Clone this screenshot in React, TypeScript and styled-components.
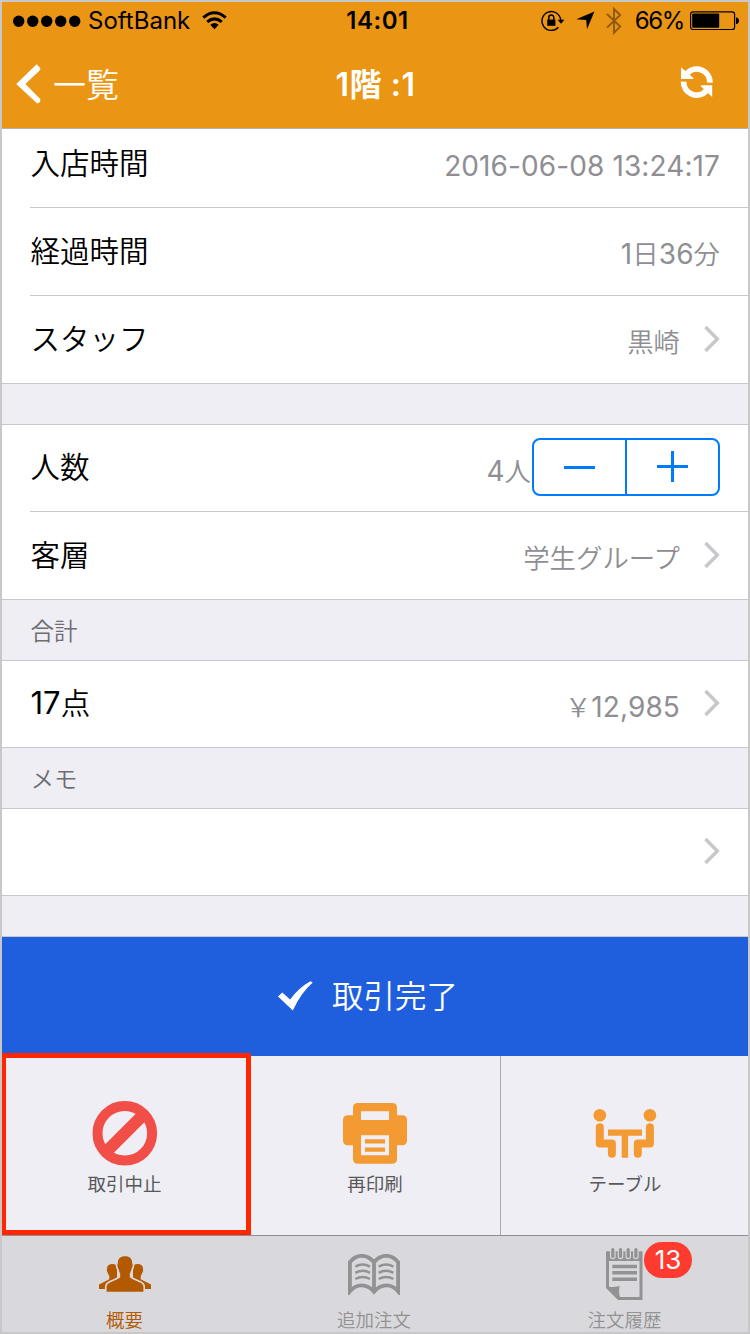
import React from "react";
import styled, { createGlobalStyle } from "styled-components";

const GlobalStyle = createGlobalStyle`
  * { box-sizing: border-box; }
  body {
    margin: 0;
    font-family: Inter, "Noto Sans CJK JP", sans-serif;
    font-weight: 400;
    color: #000;
  }
  svg { display: block; flex: none; }
  button { font: inherit; background: none; border: 0; padding: 0; margin: 0; }
`;

const Screen = styled.div`
  width: 750px;
  height: 1334px;
  border: 2px solid #c8c8c8;
  background: #efeef4;
  display: flex;
  flex-direction: column;
  overflow: hidden;
`;

const TopBar = styled.header`
  flex: none;
  height: 127px;
  background: #ea9614;
  border-bottom: 1px solid #b2b2b2;
`;

const StatusBar = styled.div`
  height: 37px;
  display: grid;
  grid-template-columns: 1fr auto 1fr;
  align-items: center;
  padding: 0 9px 0 11px;
  font-size: 24px;
  line-height: 36px;
`;

const StatusGroup = styled.div<{ $end?: boolean }>`
  display: flex;
  align-items: center;
  justify-content: ${(p) => (p.$end ? "flex-end" : "flex-start")};
`;

const StatusIcons = styled.div`
  display: flex;
  align-items: center;
  gap: 11px;
`;

const Carrier = styled.span`
  margin: 0 12px 0 7px;
`;

const Clock = styled.span`
  padding: 1px 0 0 3px;
  font-weight: 600;
  letter-spacing: 0.5px;
`;

const Percent = styled.span`
  margin: 0 6px 0 13px;
  letter-spacing: -1.4px;
`;

const NavBar = styled.nav`
  height: 89px;
  display: grid;
  grid-template-columns: 1fr auto 1fr;
  align-items: center;
  color: #fff;
  padding: 0 14px;
`;

const BackButton = styled.button`
  display: flex;
  align-items: center;
  gap: 12px;
  color: #fff;
  font-size: 33px;
  line-height: 40px;
  font-weight: 350;
`;

const BackLabel = styled.span`
  padding-top: 3px;
`;

const Title = styled.h1`
  margin: 0;
  padding: 2px 0 0 1px;
  font-size: 32px;
  line-height: 40px;
  font-weight: 600;
  letter-spacing: 0.5px;
`;

const RefreshButton = styled.button`
  justify-self: end;
  margin: -3px 20px 0 0;
`;

const Section = styled.section`
  flex: none;
  background: #fff;
  border-bottom: 1px solid #c8c7cc;
`;

const Row = styled.div<{ $height: number; $lift?: number }>`
  height: ${(p) => p.$height}px;
  margin-left: 28px;
  padding: 0 28px ${(p) => p.$lift ?? 2}px 0;
  display: flex;
  align-items: center;
  & + & { border-top: 1px solid #c8c7cc; }
`;

const Label = styled.span`
  flex: 1;
  padding-left: 0.5px;
  font-size: 29.5px;
  line-height: 40px;
  font-weight: 350;
`;

const Count = styled.span`
  font-size: 31px;
  font-weight: 400;
`;

const Value = styled.span`
  color: #8e8e93;
  font-size: 26.4px;
  line-height: 36px;
  padding-top: 7px;
  font-weight: 350;
`;

const Digits = styled.span`
  font-size: 28px;
  font-weight: 370;
  letter-spacing: 0.1px;
`;

const Disclosure = styled.svg`
  margin-left: 24px;
`;

const Gap = styled.div`
  flex: none;
  height: 41px;
  border-bottom: 1px solid #c8c7cc;
`;

const SectionTitle = styled.h2`
  flex: none;
  margin: 0;
  height: 61px;
  padding: 2px 28.5px 0;
  border-bottom: 1px solid #c8c7cc;
  color: #6d6d72;
  font-size: 23.5px;
  line-height: 60px;
  font-weight: 350;
`;

const Stepper = styled.div`
  width: 188px;
  height: 58px;
  margin-left: 1px;
  border: 2px solid #007aff;
  border-radius: 8px;
  display: flex;
`;

const StepButton = styled.button`
  flex: 1;
  display: flex;
  align-items: center;
  justify-content: center;
  padding-bottom: 2px;
  & + & { border-left: 2px solid #007aff; }
`;

const CompleteButton = styled.button`
  flex: none;
  height: 119px;
  background: #1f5fdd;
  color: #fff;
  display: flex;
  align-items: center;
  padding: 0 0 2px 276px;
  gap: 19px;
  font-size: 31.5px;
  line-height: 40px;
  font-weight: 350;
`;

const CompleteLabel = styled.span`
  padding-top: 2px;
`;

const Actions = styled.div`
  flex: none;
  height: 180px;
  display: grid;
  grid-template-columns: 249px 250px 247px;
  border-bottom: 1px solid #8e8e93;
  position: relative;
`;

const Action = styled.button`
  display: flex;
  flex-direction: column;
  align-items: center;
  border-right: 1px solid #a9a9ad;
  padding-right: 1px;
  color: #58585a;
  &:first-of-type { padding-right: 3px; }
  &:last-of-type { border-right: 0; padding: 0 0 0 1px; }
`;

const IconArea = styled.div<{ $height: number }>`
  height: ${(p) => p.$height}px;
  display: flex;
  align-items: flex-end;
`;

const ActionLabel = styled.span<{ $top: number }>`
  margin-top: ${(p) => p.$top}px;
  font-size: 18.5px;
  line-height: 24px;
`;

const Highlight = styled.div`
  position: absolute;
  left: 0;
  top: -3px;
  width: 249px;
  height: 182px;
  border: 5px solid #ff2600;
  border-left-width: 4px;
`;

const TabBar = styled.footer`
  flex: none;
  height: 96px;
  background: #d9d8dd;
  display: grid;
  grid-template-columns: 245px 254px 247px;
`;

const Tab = styled.div<{ $active?: boolean }>`
  position: relative;
  display: flex;
  flex-direction: column;
  align-items: center;
  color: ${(p) => (p.$active ? "#b35900" : "#929292")};
`;

const TabIcon = styled.div<{ $drop: number }>`
  height: 64px;
  padding-top: ${(p) => p.$drop}px;
`;

const TabLabel = styled.span`
  margin-top: 8px;
  font-size: 18.5px;
  line-height: 24px;
  font-weight: 350;
`;

const Badge = styled.span`
  position: absolute;
  left: 143px;
  top: 6px;
  width: 48px;
  height: 36px;
  border-radius: 18px;
  background: #ff3b30;
  color: #fff;
  font-size: 26px;
  line-height: 36px;
  text-align: center;
`;

const SignalDots = () => (
  <svg width="68" height="12" viewBox="0 0 68 12">
    {[5.7, 19.7, 33.7, 47.7, 61.7].map((x) => (
      <circle key={x} cx={x} cy="6.2" r="5.7" />
    ))}
  </svg>
);

const Wifi = () => (
  <svg width="25" height="19" viewBox="0 0 25 19" fill="none" stroke="#000" strokeWidth="3">
    <path d="M1.3 6.6Q12.5 -3.2 23.7 6.6" />
    <path d="M5.2 10.9Q12.5 4.8 19.8 10.9" />
    <path d="M8.3 13.8Q12.5 10.1 16.7 13.8L12.5 18.2Z" fill="#000" stroke="none" />
  </svg>
);

const RotationLock = () => (
  <svg width="24" height="22" viewBox="0 0 24 22">
    <path d="M17.4 17.2A9.4 9.4 0 1 1 19.7 10" fill="none" stroke="#000" strokeWidth="1.4" />
    <path d="M16.6 9.8h6.8l-3.4 4z" />
    <path d="M6.2 9.6h8.2v6.2H6.2z" />
    <path d="M7.8 10V7.6a2.5 2.5 0 0 1 5 0V10" fill="none" stroke="#000" strokeWidth="1.5" />
  </svg>
);

const LocationArrow = () => (
  <svg width="19" height="19" viewBox="0 0 19 19">
    <path d="M18.4.5L11 18.2 10.2 8.9.3 8.3z" />
  </svg>
);

const Bluetooth = () => (
  <svg width="16" height="28" viewBox="0 0 16 28" fill="none" stroke="#8f5b0d" strokeWidth="2">
    <path d="M1 7l13.2 12.6L8 25.6V2l6.2 6L1 20.6" />
  </svg>
);

const Battery = () => (
  <svg width="49" height="20" viewBox="0 0 49 20">
    <rect x=".6" y=".9" width="44" height="17.6" rx="2.6" fill="none" stroke="#000" strokeWidth="1.2" />
    <rect x="2.2" y="2.6" width="27" height="14.2" rx="1" />
    <path d="M46 6.4q3 .4 3 3.4t-3 3.4z" />
  </svg>
);

const BackChevron = () => (
  <svg width="25" height="40" viewBox="0 0 25 40">
    <path d="M20.6.2L24.2 4v2L9.4 20 24.2 35v3l-3 1.6L.2 20z" fill="#fff" />
  </svg>
);

const Refresh = () => (
  <svg width="34" height="34" viewBox="0 0 34 34" fill="#fff">
    <path d="M7.2 8.3A13.1 13.1 0 0 1 29.9 17.6" fill="none" stroke="#fff" strokeWidth="5.8" />
    <path d="M1 2.2V14h12.4v-1z" />
    <path d="M3.6 16.6A13.1 13.1 0 0 0 26.4 25.8" fill="none" stroke="#fff" strokeWidth="5.8" />
    <path d="M32.2 32V20.3H20.8v1z" />
  </svg>
);

const Chevron = () => (
  <Disclosure width="16" height="28" viewBox="0 0 16 28" fill="none" stroke="#c7c7cc" strokeWidth="3.5">
    <path d="M1.5 2L13.3 14 1.5 26" />
  </Disclosure>
);

const Minus = () => (
  <svg width="31" height="31" viewBox="0 0 31 31" fill="#007aff">
    <path d="M0 15h31v3H0z" />
  </svg>
);

const Plus = () => (
  <svg width="31" height="31" viewBox="0 0 31 31" fill="#007aff">
    <path d="M0 14h31v3H0zM14 0h3v31h-3z" />
  </svg>
);

const Check = () => (
  <svg width="35" height="30" viewBox="0 0 35 30" fill="#fff">
    <path d="M0 15.5L4.3 11.6l7.9 6.8Q21 6.5 32.4.3L34.7 1.4Q22.5 12.2 14.8 29.6z" />
  </svg>
);

const Prohibit = () => (
  <svg width="66" height="66" viewBox="0 0 66 66" fill="none" stroke="#f24e48">
    <circle cx="32.8" cy="33.3" r="27.3" strokeWidth="10" />
    <path d="M14.3 51.8l37-37" strokeWidth="12.2" />
  </svg>
);

const Printer = () => (
  <svg width="64" height="61" viewBox="0 0 64 61" fill="#f39b32">
    <rect y="12.3" width="64" height="30" rx="4.5" />
    <rect x="10" width="44" height="60.7" rx="4.5" />
    <path d="M18 8.3h28V17H18zM18 32.3h28v20H18z" fill="#efeef4" />
    <path d="M22 36.3h20v4.3H22zM22 44.4h20v4.3H22z" />
  </svg>
);

const TableIcon = () => (
  <svg width="64" height="50" viewBox="0 0 64 50" fill="#f39b32">
    <circle cx="6.8" cy="7.2" r="6.3" />
    <circle cx="56.9" cy="7.2" r="6.3" />
    <g fill="none" stroke="#f39b32" strokeWidth="8" strokeLinecap="round" strokeLinejoin="round">
      <path d="M6.8 19.2v16.4h12.1v10.2" />
      <path d="M56.9 19.2v16.4H44.8v10.2" />
    </g>
    <path d="M15 21.5h34v6.2H35.1v22H28.7v-22H15z" />
  </svg>
);

const People = () => (
  <svg width="52" height="36" viewBox="0 0 52 36" fill="currentColor">
    <path d="M13.5 8c2.800 0 4.200 1.200 4.500 2.900V23.500L6.500 29.500V33H0v-4.500l10.300-5.300v-3.400c-.8-.8-1.200-1.700-1.400-2.900-.8-.7-1.200-2.200-.9-4.300C8 9.600 10 8 13.500 8z" />
    <path d="M38.500 8c-2.800 0-4.200 1.200-4.500 2.900V23.500l11.500 6V33H52v-4.500l-10.300-5.300v-3.400c.8-.8 1.200-1.700 1.400-2.900.8-.7 1.200-2.200.9-4.300C44 9.600 42 8 38.500 8z" />
    <path
      stroke="#d9d8dd"
      strokeWidth="3.400"
      paintOrder="stroke"
      d="M26 .3c5 0 7.300 2.600 7.100 7 .6.700.7 1.400.4 2.900-.2 1.500-.7 2.600-1.300 3.300-.3 1.900-.8 3-1.400 3.900v3.800c1.500 1.800 6.600 3.600 10.300 5.300 2.500 1.200 3.300 2.400 3.300 4.800v4.400H7.600v-4.400c0-2.400.8-3.600 3.300-4.800 3.700-1.700 8.800-3.500 10.300-5.300v-3.800c-.6-.9-1.100-2-1.400-3.900-.6-.7-1.100-1.800-1.300-3.300-.3-1.500-.2-2.200.4-2.900-.2-4.400 2.100-7 7.100-7z"
    />
  </svg>
);

const Book = () => (
  <svg width="52" height="41" viewBox="0 0 52 41" fill="none" stroke="currentColor">
    <path
      strokeWidth="3.8"
      d="M26 8.200C19-.3 8.500-.3 1.900 8.200v29.200c6.500-8.200 17-8.200 24.100.3 7.100-8.500 17.600-8.500 24.100-.3V8.200C43.500-.3 33-.3 26 8.200zM26 8v30"
    />
    <path
      strokeWidth="2.5"
      d="M7.300 12.600q7.500-4 14.700 0M7.300 18.800q7.500-4 14.700 0M7.300 25q7.500-4 14.700 0M30.700 12.600q7.500-4 14.700 0M30.700 18.800q7.500-4 14.700 0M30.700 25q7.500-4 14.700 0"
    />
  </svg>
);

const Notepad = () => (
  <svg width="37" height="52" viewBox="0 0 37 52" fill="currentColor">
    <path fillRule="evenodd" d="M0 3.200h36.500V52H12L0 40zM3 13v25.700q4.500.6 10.800-.8-1.600 6 .2 11.100H33.500V13z" />
    <path d="M6.300 16.700h24.700v3.500H6.300zM6.300 23h24.700v3.500H6.300zM6.300 29.500h24.700v3.500H6.300z" />
    {[6.8, 14.5, 22.2, 29.9].map((x) => (
      <g key={x} fill="none" strokeLinecap="round">
        <path d={`M${x} 2.500v6`} stroke="#d9d8dd" strokeWidth="5.6" />
        <path d={`M${x} 1.700v6.800`} stroke="currentColor" strokeWidth="3.2" />
      </g>
    ))}
  </svg>
);

export default function App() {
  return (
    <>
      <GlobalStyle />
      <Screen>
        <TopBar>
          <StatusBar>
            <StatusGroup>
              <SignalDots />
              <Carrier>SoftBank</Carrier>
              <Wifi />
            </StatusGroup>
            <Clock>14:01</Clock>
            <StatusGroup $end>
              <StatusIcons>
                <RotationLock />
                <LocationArrow />
                <Bluetooth />
              </StatusIcons>
              <Percent>66%</Percent>
              <Battery />
            </StatusGroup>
          </StatusBar>
          <NavBar>
            <BackButton>
              <BackChevron />
              <BackLabel>一覧</BackLabel>
            </BackButton>
            <Title>1階 :1</Title>
            <RefreshButton aria-label="更新">
              <Refresh />
            </RefreshButton>
          </NavBar>
        </TopBar>

        <Section>
          <Row $height={78} $lift={11}>
            <Label>入店時間</Label>
            <Value><Digits>2016-06-08 13:24:17</Digits></Value>
          </Row>
          <Row $height={88}>
            <Label>経過時間</Label>
            <Value><Digits>1</Digits>日<Digits>36</Digits>分</Value>
          </Row>
          <Row $height={88}>
            <Label>スタッフ</Label>
            <Value>黒崎</Value>
            <Chevron />
          </Row>
        </Section>
        <Gap />
        <Section>
          <Row $height={86}>
            <Label>人数</Label>
            <Value><Digits>4</Digits>人</Value>
            <Stepper>
              <StepButton aria-label="減らす"><Minus /></StepButton>
              <StepButton aria-label="増やす"><Plus /></StepButton>
            </Stepper>
          </Row>
          <Row $height={88}>
            <Label>客層</Label>
            <Value>学生グループ</Value>
            <Chevron />
          </Row>
        </Section>
        <SectionTitle>合計</SectionTitle>
        <Section>
          <Row $height={86}>
            <Label><Count>17</Count>点</Label>
            <Value>￥<Digits>12,985</Digits></Value>
            <Chevron />
          </Row>
        </Section>
        <SectionTitle>メモ</SectionTitle>
        <Section>
          <Row $height={86}>
            <Label />
            <Chevron />
          </Row>
        </Section>
        <Gap />

        <CompleteButton>
          <Check />
          <CompleteLabel>取引完了</CompleteLabel>
        </CompleteButton>
        <Actions>
          <Action>
            <IconArea $height={110}><Prohibit /></IconArea>
            <ActionLabel $top={6}>取引中止</ActionLabel>
          </Action>
          <Action>
            <IconArea $height={108}><Printer /></IconArea>
            <ActionLabel $top={8}>再印刷</ActionLabel>
          </Action>
          <Action>
            <IconArea $height={102}><TableIcon /></IconArea>
            <ActionLabel $top={14}>テーブル</ActionLabel>
          </Action>
          <Highlight />
        </Actions>
        <TabBar>
          <Tab $active>
            <TabIcon $drop={20}><People /></TabIcon>
            <TabLabel>概要</TabLabel>
          </Tab>
          <Tab>
            <TabIcon $drop={18}><Book /></TabIcon>
            <TabLabel>追加注文</TabLabel>
          </Tab>
          <Tab>
            <TabIcon $drop={12}><Notepad /></TabIcon>
            <TabLabel>注文履歴</TabLabel>
            <Badge>13</Badge>
          </Tab>
        </TabBar>
      </Screen>
    </>
  );
}
